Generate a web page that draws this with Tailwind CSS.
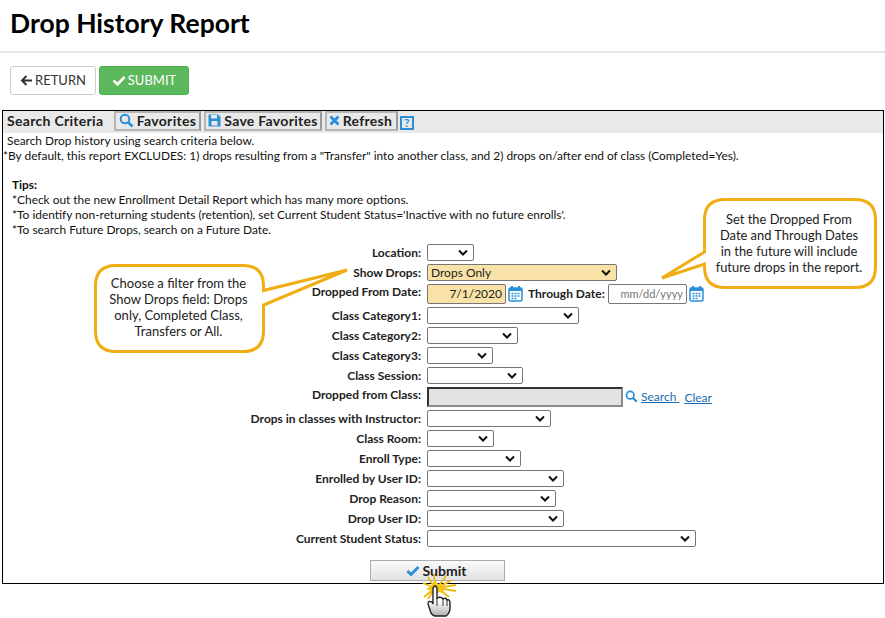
<!DOCTYPE html>
<html lang="en">
<head>
  <meta charset="UTF-8">
  <meta name="viewport" content="width=device-width, initial-scale=1">
  <title>Drop History Report</title>
  <script src="https://cdn.jsdelivr.net/npm/@tailwindcss/browser@4"></script>
</head>
<body class="bg-white font-['Lato',sans-serif] text-[#111] w-[885px] h-[618px] overflow-hidden relative">

  <!-- page title -->
  <div class="h-[53px] border-b-2 border-[#e6e6e6] pl-[10px] pt-[4px]">
    <h1 class="text-[26.5px] leading-[38px] font-bold text-black">Drop History Report</h1>
  </div>

  <!-- top buttons -->
  <div class="flex gap-[3px] pl-[10px] pt-[13px] h-[57px]">
    <button class="h-[29px] w-[86px] border border-[#ccc] rounded-[3px] bg-white text-[#333] text-[13px] flex items-center justify-center gap-[2px]">
      <svg width="13" height="13" viewBox="0 0 13 13"><path d="M6.500 2 2 6.500 6.500 11M2.500 6.500H12" fill="none" stroke="#333" stroke-width="2"/></svg>
      RETURN
    </button>
    <button class="h-[29px] w-[90px] border border-[#4cae4c] rounded-[3px] bg-[#5cb85c] text-white text-[13px] flex items-center justify-center gap-[2px]">
      <svg width="14" height="13" viewBox="0 0 14 13"><path d="M1.500 6.500 5.500 10.500 12.500 3" fill="none" stroke="#fff" stroke-width="2.600"/></svg>
      SUBMIT
    </button>
  </div>

  <!-- search box -->
  <div class="mx-[2px] w-[882px] h-[474px] border border-black text-[11.9px] leading-[15px]">
    <div class="h-[22px] bg-[#e9e9e9] flex items-start pl-[4px] text-[14px] leading-[19px] font-bold text-[#222] tracking-[0.3px]">
      <span class="w-[107px]">Search Criteria</span>
      <button class="h-[20px] w-[87px] pb-[2px] border-2 border-[#b5b5b5] border-r-[#999] flex items-center justify-center gap-[3px] font-bold">
        <svg width="15" height="15" viewBox="0 0 15 15"><circle cx="6" cy="6" r="4.300" fill="none" stroke="#2a8fd8" stroke-width="2"/><path d="M9 9l4.500 4.500" stroke="#2a8fd8" stroke-width="2.600"/></svg>
        Favorites
      </button>
      <button class="ml-[3px] h-[20px] w-[118px] pb-[2px] border-2 border-[#b5b5b5] border-r-[#999] flex items-center justify-center gap-[3px] font-bold">
        <svg width="13" height="13" viewBox="0 0 13 13"><path d="M0.500 0.500H10L12.500 3V12.500H0.500Z" fill="#2a8fd8"/><rect x="3" y="1" width="6" height="3.500" fill="#e9e9e9"/><rect x="3.500" y="7" width="6" height="4.500" fill="#e9e9e9"/></svg>
        Save Favorites
      </button>
      <button class="ml-[3px] h-[20px] w-[73px] pb-[2px] pr-[2px] border-2 border-[#b5b5b5] border-r-[#999] flex items-center justify-center gap-[3px] font-bold">
        <svg width="11" height="11" viewBox="0 0 11 11"><path d="M1.500 1.500 9.500 9.500M9.500 1.500 1.500 9.500" stroke="#2a8fd8" stroke-width="2.800"/></svg>
        Refresh
      </button>
      <span class="ml-[2px] mt-[5px] w-[14px] h-[14px] border-2 border-[#2a8fd8] text-[#2a8fd8] text-[12px] leading-[10px] text-center font-bold">?</span>
    </div>

    <div>
      <p class="pl-[4px]">Search Drop history using search criteria below.</p>
      <p>*By default, this report EXCLUDES: 1) drops resulting from a "Transfer" into another class, and 2) drops on/after end of class (Completed=Yes).</p>
      <div class="pl-[9px] pt-[14px]">
        <p class="font-bold">Tips:</p>
        <p>*Check out the new Enrollment Detail Report which has many more options.</p>
        <p>*To identify non-returning students (retention), set Current Student Status='Inactive with no future enrolls'.</p>
        <p>*To search Future Drops, search on a Future Date.</p>
      </div>
    </div>

    <!-- criteria form -->
    <div class="mt-[5px] grid grid-cols-[418px_1fr] gap-x-[6px] grid-rows-[20px_20px_23px_20px_20px_20px_20px_23px_20px_20px_20px_20px_20px_20px_20px] items-center font-bold text-[12px] text-[#222]">
      <label class="text-right">Location:</label>
      <div class="relative w-[47px] h-[17px] border border-[#767676] rounded-[2px] bg-white"><svg class="absolute right-[5px] top-[4px]" width="10" height="7" viewBox="0 0 10 7"><path d="M1 1.500 5 5.500 9 1.500" fill="none" stroke="#111" stroke-width="2"/></svg></div>

      <label class="text-right">Show Drops:</label>
      <div class="relative w-[190px] h-[17px] border border-[#767676] rounded-[2px] bg-[#f9e2a7] pl-[3px] font-normal leading-[16px]">Drops Only<svg class="absolute right-[5px] top-[4px]" width="10" height="7" viewBox="0 0 10 7"><path d="M1 1.500 5 5.500 9 1.500" fill="none" stroke="#111" stroke-width="2"/></svg></div>

      <label class="text-right self-start leading-[19px]">Dropped From Date:</label>
      <div class="flex items-center h-[23px]">
        <div class="w-[79px] h-[20px] border border-[#767676] rounded-[2px] bg-[#f9e2a7] text-right pr-[3px] font-normal leading-[18px]">7/1/2020</div>
        <svg class="ml-[2px]" width="15" height="17" viewBox="0 0 15 17"><rect x="1" y="3" width="13" height="13" rx="1.500" fill="#fff" stroke="#2a8fd8" stroke-width="1.500"/><path d="M1 3H14V6H1Z" fill="#2a8fd8"/><path d="M4 1V4M11 1V4" stroke="#2a8fd8" stroke-width="2"/><path d="M3.500 8.500h2M6.500 8.500h2M9.500 8.500h2M3.500 11h2M6.500 11h2M9.500 11h2M3.500 13.500h2M6.500 13.500h2" stroke="#2a8fd8" stroke-width="1.500"/></svg>
        <span class="ml-[5px] w-[80px]">Through Date:</span>
        <div class="w-[79px] h-[20px] border border-[#767676] rounded-[2px] bg-white text-right pr-[3px] font-normal text-[11px] text-[#757575] leading-[18px]">mm/dd/yyyy</div>
        <svg class="ml-[2px]" width="15" height="17" viewBox="0 0 15 17"><rect x="1" y="3" width="13" height="13" rx="1.500" fill="#fff" stroke="#2a8fd8" stroke-width="1.500"/><path d="M1 3H14V6H1Z" fill="#2a8fd8"/><path d="M4 1V4M11 1V4" stroke="#2a8fd8" stroke-width="2"/><path d="M3.500 8.500h2M6.500 8.500h2M9.500 8.500h2M3.500 11h2M6.500 11h2M9.500 11h2M3.500 13.500h2M6.500 13.500h2" stroke="#2a8fd8" stroke-width="1.500"/></svg>
      </div>

      <label class="text-right">Class Category1:</label>
      <div class="relative w-[152px] h-[17px] border border-[#767676] rounded-[2px] bg-white"><svg class="absolute right-[5px] top-[4px]" width="10" height="7" viewBox="0 0 10 7"><path d="M1 1.500 5 5.500 9 1.500" fill="none" stroke="#111" stroke-width="2"/></svg></div>

      <label class="text-right">Class Category2:</label>
      <div class="relative w-[91px] h-[17px] border border-[#767676] rounded-[2px] bg-white"><svg class="absolute right-[5px] top-[4px]" width="10" height="7" viewBox="0 0 10 7"><path d="M1 1.500 5 5.500 9 1.500" fill="none" stroke="#111" stroke-width="2"/></svg></div>

      <label class="text-right">Class Category3:</label>
      <div class="relative w-[66px] h-[17px] border border-[#767676] rounded-[2px] bg-white"><svg class="absolute right-[5px] top-[4px]" width="10" height="7" viewBox="0 0 10 7"><path d="M1 1.500 5 5.500 9 1.500" fill="none" stroke="#111" stroke-width="2"/></svg></div>

      <label class="text-right">Class Session:</label>
      <div class="relative w-[96px] h-[17px] border border-[#767676] rounded-[2px] bg-white"><svg class="absolute right-[5px] top-[4px]" width="10" height="7" viewBox="0 0 10 7"><path d="M1 1.500 5 5.500 9 1.500" fill="none" stroke="#111" stroke-width="2"/></svg></div>

      <label class="text-right self-start leading-[19px]">Dropped from Class:</label>
      <div class="flex items-center h-[23px] font-normal">
        <div class="w-[196px] h-[20px] border-2 border-[#333] border-b-[#8a8a8a] border-r-[#8a8a8a] bg-[#e3e3e3]"></div>
        <svg class="ml-[2px]" width="13" height="13" viewBox="0 0 15 15"><circle cx="6" cy="6" r="4.300" fill="none" stroke="#2a8fd8" stroke-width="2"/><path d="M9 9l4.500 4.500" stroke="#2a8fd8" stroke-width="2.600"/></svg>
        <a class="ml-[3px] text-[#1a6bb0] underline" href="#">Search&nbsp;</a>
        <a class="ml-[5px] mt-[2px] text-[#1a6bb0] underline" href="#">Clear</a>
      </div>

      <label class="text-right">Drops in classes with Instructor:</label>
      <div class="relative w-[124px] h-[17px] border border-[#767676] rounded-[2px] bg-white"><svg class="absolute right-[5px] top-[4px]" width="10" height="7" viewBox="0 0 10 7"><path d="M1 1.500 5 5.500 9 1.500" fill="none" stroke="#111" stroke-width="2"/></svg></div>

      <label class="text-right">Class Room:</label>
      <div class="relative w-[67px] h-[17px] border border-[#767676] rounded-[2px] bg-white"><svg class="absolute right-[5px] top-[4px]" width="10" height="7" viewBox="0 0 10 7"><path d="M1 1.500 5 5.500 9 1.500" fill="none" stroke="#111" stroke-width="2"/></svg></div>

      <label class="text-right">Enroll Type:</label>
      <div class="relative w-[94px] h-[17px] border border-[#767676] rounded-[2px] bg-white"><svg class="absolute right-[5px] top-[4px]" width="10" height="7" viewBox="0 0 10 7"><path d="M1 1.500 5 5.500 9 1.500" fill="none" stroke="#111" stroke-width="2"/></svg></div>

      <label class="text-right">Enrolled by User ID:</label>
      <div class="relative w-[137px] h-[17px] border border-[#767676] rounded-[2px] bg-white"><svg class="absolute right-[5px] top-[4px]" width="10" height="7" viewBox="0 0 10 7"><path d="M1 1.500 5 5.500 9 1.500" fill="none" stroke="#111" stroke-width="2"/></svg></div>

      <label class="text-right">Drop Reason:</label>
      <div class="relative w-[129px] h-[17px] border border-[#767676] rounded-[2px] bg-white"><svg class="absolute right-[5px] top-[4px]" width="10" height="7" viewBox="0 0 10 7"><path d="M1 1.500 5 5.500 9 1.500" fill="none" stroke="#111" stroke-width="2"/></svg></div>

      <label class="text-right">Drop User ID:</label>
      <div class="relative w-[137px] h-[17px] border border-[#767676] rounded-[2px] bg-white"><svg class="absolute right-[5px] top-[4px]" width="10" height="7" viewBox="0 0 10 7"><path d="M1 1.500 5 5.500 9 1.500" fill="none" stroke="#111" stroke-width="2"/></svg></div>

      <label class="text-right">Current Student Status:</label>
      <div class="relative w-[269px] h-[17px] border border-[#767676] rounded-[2px] bg-white"><svg class="absolute right-[5px] top-[4px]" width="10" height="7" viewBox="0 0 10 7"><path d="M1 1.500 5 5.500 9 1.500" fill="none" stroke="#111" stroke-width="2"/></svg></div>
    </div>

    <div class="flex justify-center pt-[12px]">
      <button class="ml-[-11px] w-[135px] h-[21px] border border-[#aaa] bg-gradient-to-b from-[#fafafa] to-[#e2e2e2] text-[14px] font-bold text-[#222] flex items-center justify-center gap-[3px]">
        <svg class="ml-[-3px]" width="14" height="12" viewBox="0 0 14 12"><path d="M1.500 6 5 9.500 12.500 2" fill="none" stroke="#2a8fd8" stroke-width="3"/></svg>
        Submit
      </button>
    </div>
  </div>

  <!-- callouts drawn over the form -->
  <svg class="absolute left-0 top-0 pointer-events-none" width="885" height="618" viewBox="0 0 885 618">
    <defs>
      <linearGradient id="handFill" x1="0" y1="0" x2="0" y2="1">
        <stop offset="0.500" stop-color="#fff"/>
        <stop offset="1" stop-color="#b0b0b0"/>
      </linearGradient>
    </defs>
    <path d="M116 265.500H243Q263.500 265.500 263.500 286V290.500L347 270 263.500 305V331Q263.500 351.500 243 351.500H116Q95.500 351.500 95.500 331V286Q95.500 265.500 116 265.500Z" fill="#fff" stroke="#f0ad14" stroke-width="3"/>
    <path d="M725 199.500H855Q875.500 199.500 875.500 220V267Q875.500 287.500 855 287.500H725Q704.500 287.500 704.500 267V264L662 278 704.500 252V220Q704.500 199.500 725 199.500Z" fill="#fff" stroke="#f0ad14" stroke-width="3"/>
    <!-- click burst -->
    <g stroke="#f0b90f" stroke-width="1.800" fill="none">
      <path d="M435 588 434 574M435 588 428 577M435 588 423 583M435 588 424 597M435 588 428 599M437 588 446 576M437 588 452 580M437 588 456 585M437 588 456 591M437 588 449 597"/>
    </g>
    <path d="M435 580 439 585 447 583 442 589 446 594 439 592 434 596 431 591 426 589 431 586Z" fill="#f5c518"/>
    <!-- hand cursor -->
    <path d="M433 588Q435 584 437 588V598Q441 596 443 599Q446 597 447 600Q450 599 450 603V608Q450 613 446 616H435Q431 615 430 610L428 604Q428 600 432 602L433 604Z" fill="url(#handFill)" stroke="#222" stroke-width="1.400"/>
    <path d="M437 598V606M443 599V606M447 600V606" stroke="#333" stroke-width="1" fill="none"/>
  </svg>

  <div class="absolute left-[95px] top-[275px] w-[167px] text-center text-[13px] leading-[16px] text-[#222]">Choose a filter from the<br>Show Drops field: Drops<br>only, Completed Class,<br>Transfers or All.</div>
  <div class="absolute left-[704px] top-[211px] w-[170px] text-center text-[12.9px] leading-[16px] text-[#222]">Set the Dropped From<br>Date and Through Dates<br>in the future will include<br>future drops in the report.</div>

</body>
</html>
